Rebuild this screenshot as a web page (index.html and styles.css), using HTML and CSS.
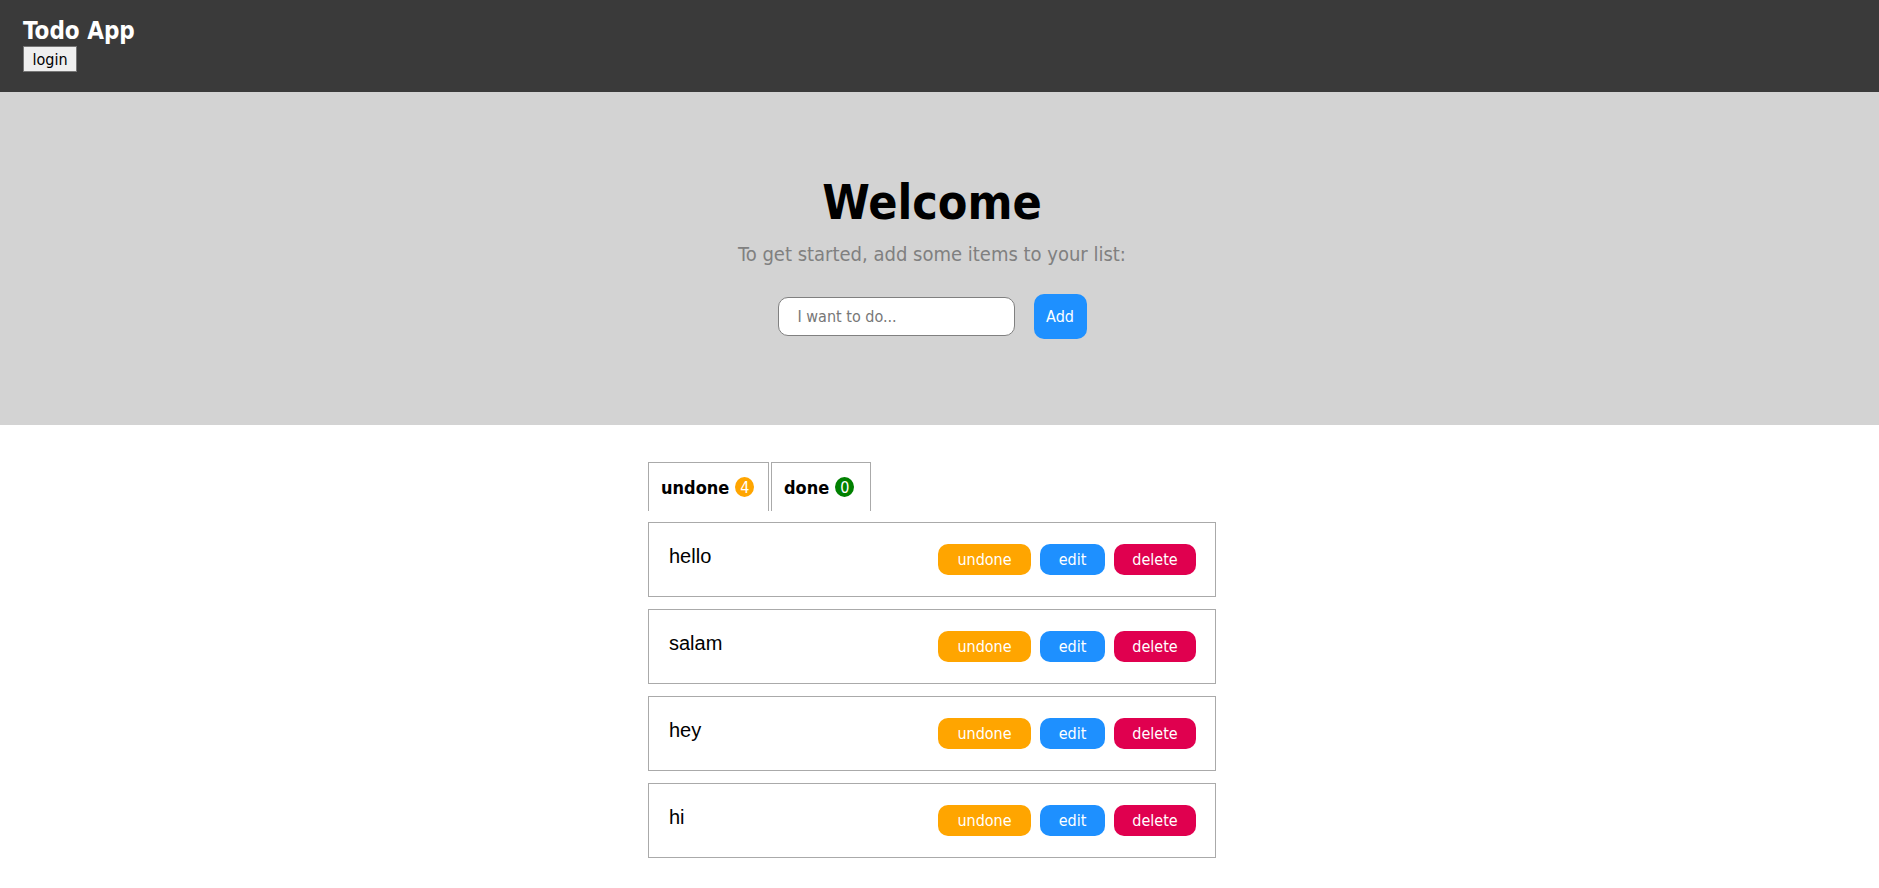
FILE: index.html
```html
<!DOCTYPE html>
<html>
<head>
<meta charset="utf-8">
<title>Todo App</title>
<link rel="stylesheet" href="styles.css">
</head>
<body>
<header class="topbar">
  <div class="brand">Todo App</div>
  <button class="login">login</button>
</header>
<section class="hero">
  <h1 class="title">Welcome</h1>
  <p class="subtitle">To get started, add some items to your list:</p>
  <form class="add-form">
    <input class="add-input" type="text" placeholder="I want to do...">
    <button class="add-btn" type="button">Add</button>
  </form>
</section>
<main class="content">
  <div class="board">
    <div class="tabs">
      <div class="tab active">undone <span class="badge badge-orange">4</span></div>
      <div class="tab">done <span class="badge badge-green">0</span></div>
    </div>
    <ul class="list">
      <li class="item"><span class="item-text">hello</span><div class="actions"><button class="btn btn-undone">undone</button><button class="btn btn-edit">edit</button><button class="btn btn-delete">delete</button></div></li>
      <li class="item"><span class="item-text">salam</span><div class="actions"><button class="btn btn-undone">undone</button><button class="btn btn-edit">edit</button><button class="btn btn-delete">delete</button></div></li>
      <li class="item"><span class="item-text">hey</span><div class="actions"><button class="btn btn-undone">undone</button><button class="btn btn-edit">edit</button><button class="btn btn-delete">delete</button></div></li>
      <li class="item"><span class="item-text">hi</span><div class="actions"><button class="btn btn-undone">undone</button><button class="btn btn-edit">edit</button><button class="btn btn-delete">delete</button></div></li>
    </ul>
  </div>
</main>
</body>
</html>
```
FILE: styles.css
```css
* { box-sizing: border-box; }
html, body { margin: 0; padding: 0; }
body {
  font-family: "DejaVu Sans Condensed", "DejaVu Sans", sans-serif;
  background: #fff;
  color: #000;
}
.topbar {
  background: #3a3a3a;
  height: 92px;
  padding: 17px 23px 0;
  display: flex;
  flex-direction: column;
  align-items: flex-start;
}
.brand {
  color: #fff;
  font-weight: bold;
  font-size: 24px;
  line-height: 29px;
}
.login {
  font-family: "DejaVu Sans Condensed", "DejaVu Sans", sans-serif;
  font-size: 16px;
  height: 26px;
  width: 54px;
  padding: 0;
  background: #efefef;
  border: 1px solid #767676;
  border-radius: 0;
  color: #000;
}
.hero {
  background: #d3d3d3;
  height: 333px;
  display: flex;
  flex-direction: column;
  align-items: center;
  padding-right: 15px;
}
.title {
  margin: 81px 0 0;
  font-size: 48px;
  line-height: 58px;
  font-weight: bold;
}
.subtitle {
  margin: 11px 0 0;
  font-size: 20px;
  line-height: 25px;
  color: #808080;
}
.add-form {
  margin-top: 27px;
  display: flex;
  align-items: center;
  gap: 19px;
}
.add-input {
  width: 237px;
  height: 39px;
  border: 1px solid #808080;
  border-radius: 10px;
  padding: 0 19px;
  font-family: "DejaVu Sans Condensed", "DejaVu Sans", sans-serif;
  font-size: 16px;
  background: #fff;
  outline: none;
}
.add-input::placeholder { color: #777; }
.add-btn {
  width: 53px;
  height: 45px;
  border: none;
  border-radius: 10px;
  background: #1e90ff;
  color: #fff;
  font-family: "DejaVu Sans Condensed", "DejaVu Sans", sans-serif;
  font-size: 16px;
  padding: 0;
}
.content {
  padding-right: 15px;
  margin-top: 37px;
  display: flex;
  justify-content: center;
}
.board { width: 568px; }
.tabs {
  display: flex;
  gap: 2px;
  height: 49px;
}
.tab {
  border: 1px solid #aaa;
  border-bottom: none;
  padding: 0 12px;
  display: flex;
  align-items: center;
  gap: 6px;
  font-weight: bold;
  font-size: 18px;
  height: 49px;
}
.tab.active { width: 121px; }
.tab + .tab { width: 100px; }
.badge {
  display: inline-flex;
  align-items: center;
  justify-content: center;
  width: 19px;
  height: 20px;
  border-radius: 50%;
  color: #fff;
  font-weight: normal;
  font-size: 16px;
}
.badge-orange { background: #ffa500; }
.badge-green { background: #008000; }
.list {
  list-style: none;
  margin: 11px 0 0;
  padding: 0;
  display: flex;
  flex-direction: column;
  gap: 12px;
}
.item {
  border: 1px solid #aaa;
  height: 75px;
  display: flex;
  align-items: center;
  justify-content: space-between;
  padding: 0 19px 0 20px;
}
.item-text {
  font-family: "Liberation Sans", Arial, sans-serif;
  font-size: 20px;
  margin-top: -6px;
}
.actions {
  display: flex;
  gap: 9px;
}
.btn {
  height: 31px;
  border: none;
  border-radius: 10px;
  color: #fff;
  font-family: "DejaVu Sans Condensed", "DejaVu Sans", sans-serif;
  font-size: 16px;
  padding: 0;
}
.btn-undone { background: #ffa500; width: 93px; }
.btn-edit { background: #1e90ff; width: 65px; }
.btn-delete { background: #e0004f; width: 82px; }
```
